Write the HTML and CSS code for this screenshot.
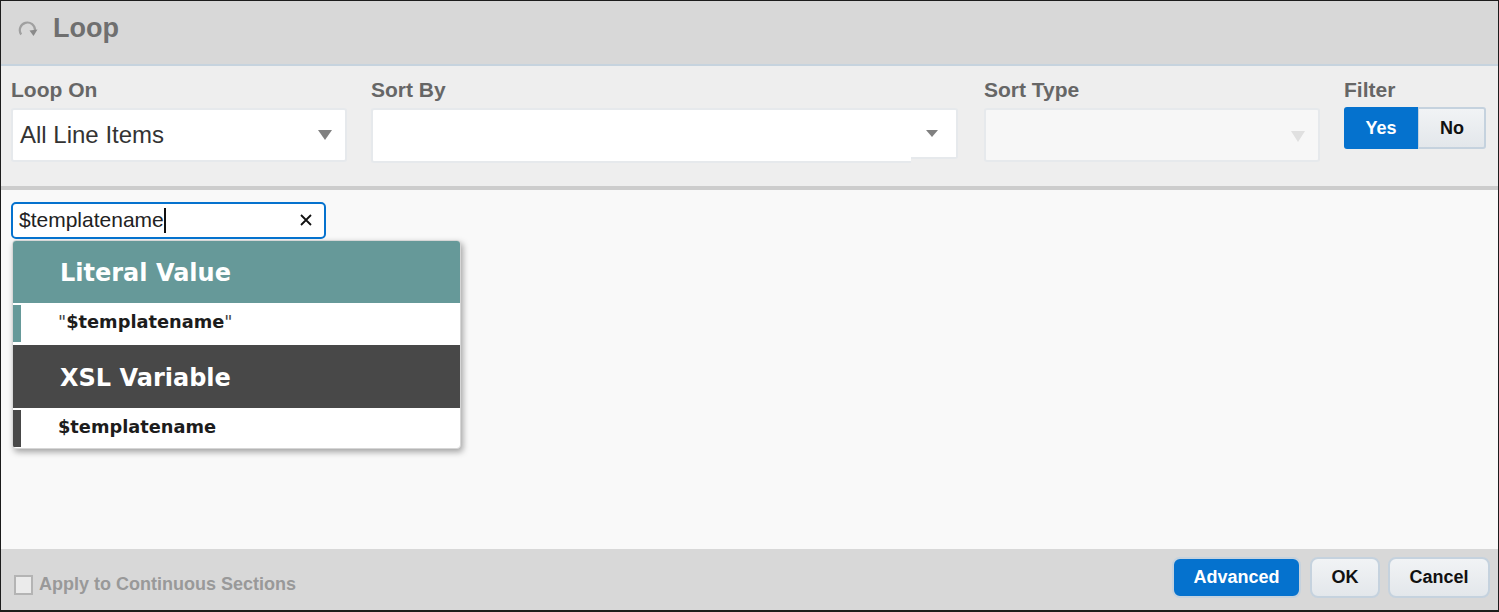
FILE: index.html
```html
<!DOCTYPE html>
<html lang="en">
<head>
<meta charset="utf-8">
<title>Loop</title>
<link rel="stylesheet" href="styles.css">
</head>
<body>
<div class="dialog">
  <header class="head">
    <svg class="loop-icon" width="20" height="20" viewBox="0 0 20 20" aria-hidden="true">
      <path d="M3.2 16.5 A7.6 7.6 0 1 1 17 12.5" fill="none" stroke="#a0a0a0" stroke-width="2.2"/>
      <path d="M11.5 12.5 L19.5 11.5 L15.5 18 Z" fill="#8a8a8a"/>
    </svg>
    <h1 class="title">Loop</h1>
  </header>
  <section class="filters">
    <div class="field field-loop">
      <label class="label">Loop On</label>
      <div class="select">
        <span class="select-text">All Line Items</span>
        <span class="arrow"></span>
      </div>
    </div>
    <div class="field field-sort">
      <label class="label">Sort By</label>
      <div class="combo">
        <div class="combo-input"></div>
        <div class="combo-btn"><span class="arrow arrow-small"></span></div>
      </div>
    </div>
    <div class="field field-type">
      <label class="label">Sort Type</label>
      <div class="select select-disabled">
        <span class="arrow arrow-disabled"></span>
      </div>
    </div>
    <div class="field field-filter">
      <label class="label">Filter</label>
      <div class="toggle">
        <span class="toggle-yes">Yes</span>
        <span class="toggle-no">No</span>
      </div>
    </div>
  </section>
  <main class="content">
    <div class="search">
      <span class="search-text">$templatename</span><span class="caret"></span>
      <span class="search-clear">
        <svg width="12" height="12" viewBox="0 0 12 12" aria-hidden="true"><path d="M1 1 L11 11 M11 1 L1 11" stroke="#111" stroke-width="1.8"/></svg>
      </span>
    </div>
    <div class="menu">
      <div class="group-head group-teal">Literal Value</div>
      <div class="item item-teal"><span class="quote">"</span><b>$templatename</b><span class="quote">"</span></div>
      <div class="group-head group-dark">XSL Variable</div>
      <div class="item item-dark item-last"><b>$templatename</b></div>
    </div>
  </main>
  <footer class="foot">
    <label class="apply"><span class="check"></span>Apply to Continuous Sections</label>
    <div class="actions">
      <button class="btn btn-primary">Advanced</button>
      <button class="btn btn-ok">OK</button>
      <button class="btn btn-cancel">Cancel</button>
    </div>
  </footer>
</div>
</body>
</html>
```
FILE: styles.css
```css
* { box-sizing: border-box; }
html, body { margin: 0; height: 100%; }
body { background: #fff; font-family: "Liberation Sans", Arial, sans-serif; overflow: hidden; }
.dialog {
  width: 1499px; height: 612px;
  border: 1px solid #1c1c1c; border-width: 1px 1px 2px 1px;
  display: flex; flex-direction: column;
  background: #f9f9f9;
}
.head {
  height: 65px; flex: none;
  background: #d8d8d8;
  border-bottom: 2px solid #c6d3de;
  display: flex; align-items: center;
  padding: 0 0 9px 17px;
}
.loop-icon { flex: none; margin-top: -1px; }
.title { margin: 0 0 0 15px; font-size: 27px; font-weight: 700; color: #6f6f6f; }
.filters {
  height: 124px; flex: none;
  background: #eeeeee;
  border-bottom: 4px solid #cccccc;
  display: flex;
  padding: 12px 0 0 10px;
}
.field { display: flex; flex-direction: column; }
.field-loop { width: 336px; margin-right: 24px; }
.field-sort { width: 587px; margin-right: 26px; }
.field-type { width: 336px; margin-right: 24px; }
.field-filter { width: 142px; }
.label { font-size: 21px; font-weight: 700; color: #666666; line-height: 24px; height: 30px; }
.select {
  height: 54px; background: #fff;
  border: 2px solid #e6e9ec; border-radius: 3px;
  display: flex; align-items: center; justify-content: space-between;
  padding: 0 13px 0 7px;
}
.select-text { font-size: 24px; color: #333; }
.arrow {
  width: 0; height: 0;
  border-left: 7px solid transparent; border-right: 7px solid transparent;
  border-top: 10px solid #808080;
}
.arrow-small { border-left-width: 6px; border-right-width: 6px; border-top-width: 7px; }
.select-disabled { background: #f7f7f7; justify-content: flex-end; }
.arrow-disabled { border-top: 11px solid #e0e0e0; margin-top: 3px; }
.combo { display: flex; align-items: flex-start; }
.combo-input {
  width: 540px; height: 55px; background: #fff;
  border: 2px solid #e6e9ec; border-right: none; border-radius: 3px 0 0 3px;
}
.combo-btn {
  width: 47px; height: 51px; background: #fff;
  border: 2px solid #e6e9ec; border-left: none; border-radius: 0 3px 3px 0;
  display: flex; align-items: center; justify-content: center;
  padding-right: 3px; margin-bottom: 4px;
}
.toggle { display: flex; height: 42px; margin-top: -1px; font-size: 18px; font-weight: 700; }
.toggle-yes {
  width: 74px; background: #0572ce; color: #fff;
  border-radius: 3px 0 0 3px;
  display: flex; align-items: center; justify-content: center;
}
.toggle-no {
  width: 68px; color: #111;
  background: linear-gradient(#f1f3f5, #e3e7eb);
  border: 2px solid #c5d2de; border-left: 1px solid #c5d2de; border-radius: 0 3px 3px 0;
  display: flex; align-items: center; justify-content: center;
  padding-left: 1px;
}
.content { flex: 1; padding: 12px 0 0 10px; min-height: 0; }
.search {
  width: 315px; height: 37px; background: #fff;
  border: 2px solid #0572ce; border-radius: 5px;
  display: flex; align-items: center;
  padding: 0 0 2px 6px; position: relative;
  font-size: 21px; color: #222;
}
.caret { width: 2px; height: 25px; background: #111; margin-top: 2px; }
.search-clear { position: absolute; right: 12px; top: 10px; display: flex; }
.menu {
  width: 449px; margin: 1px 0 0 1px;
  background: #fff;
  border: 1px solid #d6d6d6; border-radius: 4px;
  box-shadow: 2px 3px 6px rgba(0,0,0,.35);
  overflow: hidden;
  font-family: "DejaVu Sans", Verdana, sans-serif;
}
.group-head {
  display: flex; align-items: center;
  padding: 2px 0 0 47px;
  font-size: 24px; font-weight: 700; color: #fff;
}
.group-teal { height: 62px; background: #669999; }
.group-dark { height: 63px; background: #484848; }
.item {
  height: 37px; margin: 2px 0 3px;
  border-left: 8px solid #669999;
  padding: 0 0 4px 37px;
  display: flex; align-items: center;
  font-size: 17.8px; color: #1c1c1c;
}
.item b { font-weight: 700; }
.quote { color: #444; font-weight: 400; }
.item-dark { border-left-color: #484848; }
.item-last { margin-bottom: 1px; }
.foot {
  height: 61px; flex: none;
  background: #d8d8d8;
  display: flex; align-items: center; justify-content: space-between;
  padding: 0 8px 0 13px;
}
.apply {
  display: flex; align-items: center;
  font-size: 18px; font-weight: 700; color: #999999;
  margin-top: 10px;
}
.check {
  width: 19px; height: 20px; margin-right: 6px;
  background: #ebebeb; border: 2px solid #b4b4b4;
}
.actions { display: flex; gap: 8px; margin-top: -4px; }
.btn {
  height: 41px; padding: 0;
  font-family: inherit; font-size: 18px; font-weight: 700;
  border-radius: 8px; border: 2px solid #c5d2de;
  background: linear-gradient(#f1f3f5, #e3e7eb); color: #111;
}
.btn-primary { width: 129px; margin-right: 1px; background: #0572ce; color: #fff; }
.btn-ok { width: 70px; }
.btn-cancel { width: 102px; }
```
